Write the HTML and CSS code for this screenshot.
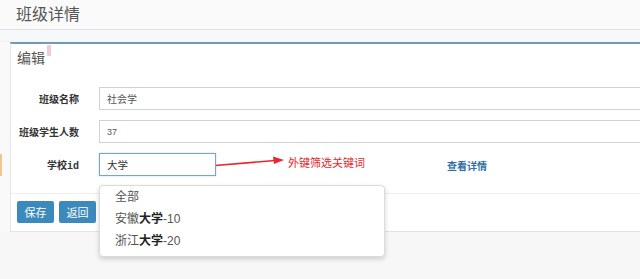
FILE: index.html
```html
<!DOCTYPE html>
<html>
<head>
    <meta charset="utf-8" />
    <title>班级详情</title>
    <link rel="stylesheet" href="styles.css">
</head>
<body>
    <div class="page-header">班级详情</div>
    <div class="header-strip"></div>
    <div class="main">
        <div class="gutter"><div class="gutter-tab"></div></div>
        <div class="card">
            <div class="card-title">编辑<span class="title-mark"></span></div>
            <div class="form">
                <div class="form-row">
                    <label class="form-label">班级名称</label>
                    <input class="form-input wide" type="text" value="社会学">
                </div>
                <div class="form-row">
                    <label class="form-label">班级学生人数</label>
                    <input class="form-input wide num" type="text" value="37">
                </div>
                <div class="form-row">
                    <label class="form-label">学校<span class="mono">id</span></label>
                    <div class="select-wrap">
                        <input class="form-input short" type="text" value="大学">
                        <ul class="dropdown">
                            <li>全部</li>
                            <li>安徽<b>大学</b>-10</li>
                            <li>浙江<b>大学</b>-20</li>
                        </ul>
                    </div>
                    <svg class="arrow" width="76" height="23" viewBox="0 0 76 23">
                        <path d="M0 13 L66 7.5" stroke="#e8262b" stroke-width="1.6" fill="none"/>
                        <path d="M64 3.5 L75 7 L65 11 Z" fill="#e8262b"/>
                    </svg>
                    <span class="note">外键筛选关键词</span>
                    <a class="detail-link" href="#">查看详情</a>
                </div>
            </div>
            <div class="card-footer">
                <button class="btn">保存</button>
                <button class="btn">返回</button>
            </div>
        </div>
    </div>
</body>
</html>
```

FILE: styles.css
```css
html {
    overflow: hidden;
}
body {
    margin: 0;
    padding: 0;
    min-height: 279px;
    background: #f7f7f7;
    font-family: "Liberation Sans", "Noto Sans CJK SC", sans-serif;
    color: #333;
}
.page-header {
    height: 29px;
    line-height: 29px;
    padding-left: 16px;
    font-size: 16px;
    color: #555;
    background: #fafafa;
    border-bottom: 1px solid #e2e2e2;
}
.header-strip {
    height: 11px;
    background: #f5f9fc;
    border-bottom: 1px solid #fbf1e8;
}
.main {
    display: flex;
}
.gutter {
    width: 10px;
    flex: none;
    background: #f9f9f9;
    border-left: 1px solid #ececec;
    margin-left: -1px;
}
.gutter-tab {
    width: 3px;
    height: 22px;
    margin-top: 112px;
    margin-left: -1px;
    background: #f3c48f;
}
.card {
    flex: 1;
    min-width: 0;
    align-self: flex-start;
    background: #fff;
    border-top: 2px solid #6c9cb9;
    border-left: 1px solid #e6e6e6;
    border-bottom: 1px solid #e3e3e3;
}
.card-title {
    padding: 6px 0 0 6px;
    font-size: 14px;
    line-height: 16px;
    color: #555;
}
.title-mark {
    display: inline-block;
    width: 4px;
    height: 11px;
    margin-left: 2px;
    vertical-align: top;
    margin-top: -5px;
    background: #f1cdd1;
}
.form {
    padding: 21px 0 17px 0;
    margin-right: -4px;
    display: flex;
    flex-direction: column;
    gap: 10px;
}
.form-row {
    display: flex;
    align-items: center;
    height: 23px;
}
.form-label {
    width: 68px;
    flex: none;
    margin-right: 20px;
    text-align: right;
    font-size: 10px;
    font-weight: bold;
    color: #333;
}
.mono {
    font-family: "Liberation Mono", monospace;
    font-size: 10px;
}
.form-input {
    box-sizing: border-box;
    height: 23px;
    border: 1px solid #d2d2d2;
    padding: 0 7px;
    font-size: 10px;
    font-family: "Liberation Sans", "Noto Sans CJK SC", sans-serif;
    color: #555;
    outline: none;
}
.form-input.wide {
    flex: 1;
    min-width: 0;
}
.form-input.num {
    font-size: 9px;
}
.form-input.short {
    width: 117px;
    border-color: #77a6c9;
    box-shadow: 0 0 2px rgba(102, 160, 210, 0.4);
    color: #333;
    font-size: 10.5px;
}
.select-wrap {
    position: relative;
    flex: none;
}
.dropdown {
    position: absolute;
    top: 32px;
    left: 0;
    width: 286px;
    height: 72px;
    box-sizing: border-box;
    margin: 0;
    padding: 0 0 0 15px;
    list-style: none;
    background: #fff;
    border: 1px solid #dcdcdc;
    border-radius: 4px;
    box-shadow: 0 2px 5px rgba(0, 0, 0, 0.18);
    font-size: 12px;
    line-height: 22px;
    color: #555;
    z-index: 2;
}
.dropdown b {
    color: #222;
}
.arrow {
    flex: none;
    margin-left: -7px;
}
.note {
    margin-left: 3px;
    font-size: 11px;
    color: #e8262b;
    align-self: flex-start;
    margin-top: 1px;
}
.detail-link {
    margin-left: 82px;
    font-size: 10px;
    font-weight: bold;
    color: #2f6fa5;
    text-decoration: none;
    margin-top: 2px;
}
.card-footer {
    border-top: 1px solid #efefef;
    padding: 7px 0 8px 6px;
    display: flex;
    gap: 5px;
}
.btn {
    width: 37px;
    height: 22px;
    padding: 0;
    border: none;
    border-radius: 2px;
    background: #3b8abb;
    color: #fff;
    font-size: 11px;
    font-family: "Liberation Sans", "Noto Sans CJK SC", sans-serif;
}
```
